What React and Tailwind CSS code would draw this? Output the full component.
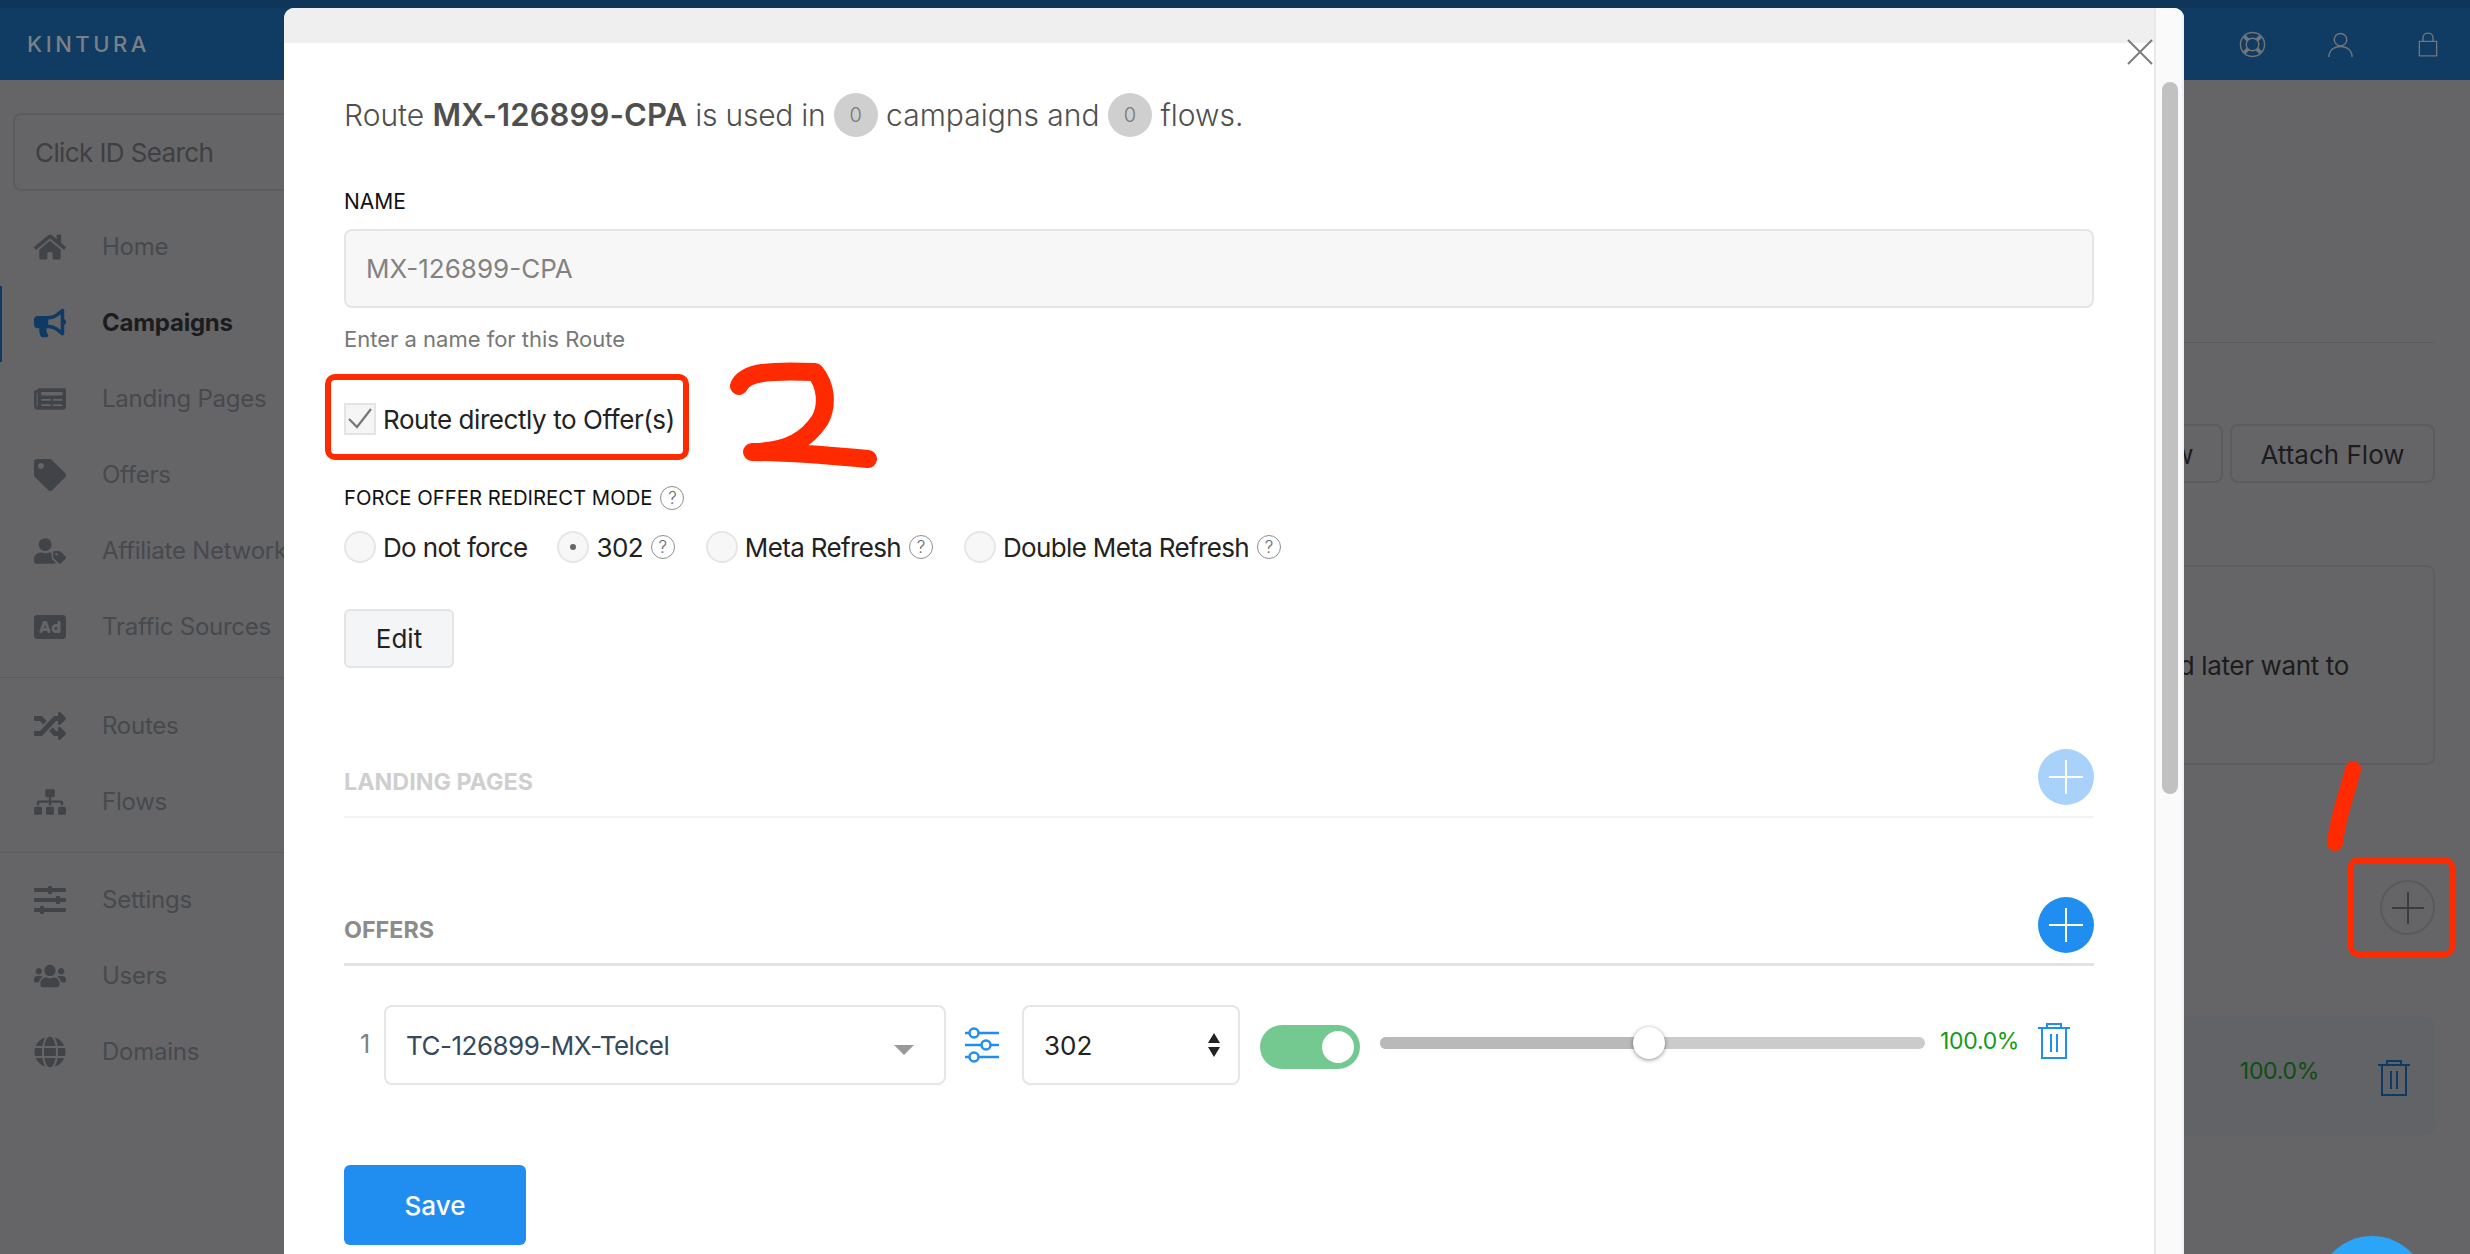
import React from "react";
import { FaHome, FaBullhorn, FaNewspaper, FaTag, FaUserTag, FaAd, FaRandom, FaSitemap, FaSlidersH, FaUsers, FaGlobe } from "react-icons/fa";

function NavItem({ icon: Icon, label, active }) {
  return (
    <div className={"relative flex h-[76px] items-center pl-[34px] text-[24px] tracking-[-0.25px] " + (active ? "font-bold text-[#1b1c1e]" : "text-[#46494d]")}>
      {active && <span className="absolute left-0 top-px h-[76px] w-[2px] bg-[#0f3a63]" />}
      <span className={"flex w-[68px] shrink-0 items-center " + (active ? "text-[#0f3a63]" : "text-[#404347]")}>
        <Icon size={32} />
      </span>
      <span className="whitespace-nowrap">{label}</span>
    </div>
  );
}

function Plus({ color = "#ffffff", size = 36 }) {
  return (
    <svg width={size} height={size} viewBox="0 0 36 36" fill="none" stroke={color} strokeWidth="2">
      <path d="M1 18H35M18 1V35" />
    </svg>
  );
}

function Trash({ color, className }) {
  return (
    <svg className={className} width="32" height="36" viewBox="0 0 32 36" fill="none" stroke={color} strokeWidth="2">
      <path d="M0 5H32M4 5V35H28V5M9 5V1H23V5M13 11V29M19 11V29" />
    </svg>
  );
}

function Help() {
  return (
    <span className="ml-2 flex h-6 w-6 shrink-0 items-center justify-center rounded-full border border-[#8f8f8f] text-[17px] font-light leading-none tracking-normal text-[#666]">?</span>
  );
}

function Radio({ label, checked, help, className = "" }) {
  return (
    <div className={"flex items-center text-[26px] tracking-[-0.65px] text-[#222] " + className}>
      <span className="mr-[7px] flex h-8 w-8 items-center justify-center rounded-full border-2 border-[#e6e6e6] bg-[#f7f7f7]">
        {checked && <span className="h-[6px] w-[6px] rounded-full bg-[#666]" />}
      </span>
      <span className="whitespace-nowrap">{label}</span>
      {help && <Help />}
    </div>
  );
}

function RedBox({ className }) {
  return <div className={"pointer-events-none absolute rounded-[10px] border-[6px] border-[#ff2a00] " + className} />;
}

export default function App() {
  return (
    <div className="relative h-[1254px] w-[2470px] overflow-hidden bg-[#656567] font-['Inter',sans-serif]">
      <header className="flex h-20 items-center justify-between bg-[#103b62] border-t-[8px] border-[#0f3659] pl-[27px] pr-[32px]">
        <span className="text-[22px] font-medium tracking-[0.16em] text-[#7b8084]">KINTURA</span>
        <div className="flex items-center">
          <svg className="mr-[62px]" width="27" height="27" viewBox="0 0 28 28" fill="none" stroke="#6f757a" strokeWidth="1.5">
            <circle cx="14" cy="14" r="12.5" />
            <circle cx="14" cy="14" r="6.5" />
            <path strokeWidth="4" d="M9.5 9.5L5.5 5.5M18.5 9.5L22.5 5.5M9.5 18.5L5.5 22.5M18.5 18.5L22.5 22.5" />
          </svg>
          <svg className="mr-[65px]" width="25" height="25" viewBox="0 0 26 26" fill="none" stroke="#6f757a" strokeWidth="1.5">
            <circle cx="13" cy="8" r="6.5" />
            <path d="M1 26C1 19 6 15 13 15C20 15 25 19 25 26" />
          </svg>
          <svg width="20" height="25" viewBox="0 0 22 27" fill="none" stroke="#6f757a" strokeWidth="1.5">
            <path d="M1.5 10H20.5V26H1.5ZM5.5 10V6C5.5 3 8 1 11 1C14 1 16.5 3 16.5 6V10" />
          </svg>
        </div>
      </header>

      <div className="flex h-[1174px]">
        <aside className="w-[300px] shrink-0 pt-[33px]">
          <div className="ml-[13px] flex h-[78px] items-center rounded-[8px] border-2 border-[#5c5c5e] pl-5 text-[26px] tracking-[-0.6px] text-[#3d3f41]">
            Click ID Search
          </div>
          <nav className="mt-[18px]">
            <NavItem icon={FaHome} label="Home" />
            <NavItem icon={FaBullhorn} label="Campaigns" active />
            <NavItem icon={FaNewspaper} label="Landing Pages" />
            <NavItem icon={FaTag} label="Offers" />
            <NavItem icon={FaUserTag} label="Affiliate Networks" />
            <NavItem icon={FaAd} label="Traffic Sources" />
            <div className="mb-[10px] mt-3 h-px bg-[#5b5b5d]" />
            <NavItem icon={FaRandom} label="Routes" />
            <NavItem icon={FaSitemap} label="Flows" />
            <div className="mb-[9px] mt-3 h-px bg-[#5b5b5d]" />
            <NavItem icon={FaSlidersH} label="Settings" />
            <NavItem icon={FaUsers} label="Users" />
            <NavItem icon={FaGlobe} label="Domains" />
          </nav>
        </aside>

        <main className="flex min-w-0 flex-1 flex-col items-end pr-[35px]">
          <div className="mt-[262px] h-px w-[500px] bg-[#5b5b5d]" />
          <div className="mt-[81px] flex gap-[7px]">
            <div className="flex h-[59px] w-[205px] items-center justify-center rounded-[8px] border-2 border-[#5c5c5e] pt-[2px] text-[26px] text-[#1c1c1e]">Attach View</div>
            <div className="flex h-[59px] w-[205px] items-center justify-center rounded-[8px] border-2 border-[#5c5c5e] pt-[2px] text-[26px] text-[#1c1c1e]">Attach Flow</div>
          </div>
          <div className="mt-[82px] flex h-[200px] w-[500px] items-center justify-end rounded-[8px] border-2 border-[#5e5e60] pr-[84px]">
            <span className="whitespace-nowrap text-[26px] tracking-[-0.35px] text-[#1c1c1e]">and later want to</span>
          </div>
          <div className="mt-[115px] flex h-[55px] w-[55px] items-center justify-center rounded-full border-2 border-[#5a5a5c]">
            <Plus color="#3b3b3d" size={34} />
          </div>
          <div className="mt-[82px] flex h-[118px] w-[500px] items-center justify-end gap-[59px] rounded-[8px] border-2 border-[#5f6469] bg-[#626366] pr-[23px]">
            <span className="-translate-y-[5px] text-[23px] tracking-[-0.3px] text-[#0f4d13]">100.0%</span>
            <Trash color="#0f3a63" className="translate-y-[2px]" />
          </div>
        </main>
      </div>

      <div className="absolute bottom-0 left-[284px] top-2 flex w-[1900px] overflow-hidden rounded-t-[10px] bg-white">
        <div className="min-w-0 flex-1">
          <div className="h-[35px] bg-[#efefef]" />
          <div className="pl-[60px] pr-[60px] pt-[50px]">
            <div className="flex h-[44px] items-center text-[30px] font-light text-[#4f4f4f]">
              <span>Route&nbsp;</span>
              <strong className="text-[31px] font-semibold tracking-[0.1px]">MX-126899-CPA</strong>
              <span className="tracking-[-0.25px]">&nbsp;is used in&nbsp;</span>
              <span className="flex h-[44px] w-[44px] items-center justify-center rounded-full bg-[#cfcfcf] text-[20px] text-[#777]">0</span>
              <span>&nbsp;campaigns and&nbsp;</span>
              <span className="flex h-[44px] w-[44px] items-center justify-center rounded-full bg-[#cfcfcf] text-[20px] text-[#777]">0</span>
              <span>&nbsp;flows.</span>
            </div>

            <div className="mt-[52px] h-[26px] text-[21px] leading-[26px] text-[#111]">NAME</div>
            <div className="mt-[14px] flex h-[79px] items-center rounded-[8px] border-2 border-[#e5e5e5] bg-[#f7f7f7] pl-5 text-[26px] text-[#828282]">MX-126899-CPA</div>
            <div className="mt-[17px] h-[28px] text-[22px] leading-[28px] text-[#777]">Enter a name for this Route</div>

            <div className="mt-[50px] flex h-8 items-center text-[26px] tracking-[-0.42px] text-[#222]">
              <span className="mr-[7px] flex h-8 w-8 items-center justify-center border-2 border-[#e4e4e4] bg-[#f5f5f5]">
                <svg width="24" height="24" viewBox="0 0 24 24" fill="none" stroke="#777" strokeWidth="2.2"><path d="M1 12L9 20L23 2" /></svg>
              </span>
              Route directly to Offer(s)
            </div>

            <div className="mt-[51px] flex h-6 items-center text-[20.3px] text-[#111]">
              FORCE OFFER REDIRECT MODE
              <Help />
            </div>
            <div className="mt-[21px] flex h-8 items-center">
              <Radio label="Do not force" />
              <Radio label="302" checked help className="ml-[30px]" />
              <Radio label="Meta Refresh" help className="ml-[31px]" />
              <Radio label="Double Meta Refresh" help className="ml-[31px]" />
            </div>

            <div className="mt-[46px] flex h-[59px] w-[110px] items-center justify-center rounded-[6px] border-2 border-[#e4e4e4] bg-[#f4f5f6] text-[26px] text-[#222]">Edit</div>

            <div className="mt-[81px] flex h-[56px] items-center justify-between">
              <span className="mt-[10px] text-[23.3px] font-bold text-[#cfcfcf]">LANDING PAGES</span>
              <span className="flex h-14 w-14 items-center justify-center rounded-full bg-[#a9d2fb]"><Plus /></span>
            </div>
            <div className="mt-[11px] h-[2px] bg-[#f3f3f3]" />

            <div className="mt-[79px] flex h-[56px] items-center justify-between">
              <span className="mt-[10px] text-[23.3px] font-bold text-[#8c8c8c]">OFFERS</span>
              <span className="flex h-14 w-14 items-center justify-center rounded-full bg-[#208ef0]"><Plus /></span>
            </div>
            <div className="mt-[10px] h-[3px] bg-[#e3e3e3]" />

            <div className="mt-[39px] flex h-[80px] items-center">
              <span className="w-10 shrink-0 pl-4 text-[25px] text-[#808080]">1</span>
              <div className="flex h-20 w-[562px] shrink-0 items-center justify-between rounded-[8px] border-2 border-[#e6e6e6] pl-5 pr-[30px] text-[26px] tracking-[-0.5px] text-[#34495e]">
                TC-126899-MX-Telcel
                <span className="mt-[10px] h-0 w-0 border-x-[10px] border-t-[10px] border-x-transparent border-t-[#999]" />
              </div>
              <svg className="ml-[18px] shrink-0" width="36" height="36" viewBox="0 0 36 36" fill="none" stroke="#208ef0" strokeWidth="2.5">
                <path d="M1 6H5M15 6H35M1 18H17M27 18H35M1 30H5M15 30H35" />
                <circle cx="10" cy="6" r="4.5" />
                <circle cx="22" cy="18" r="4.5" />
                <circle cx="10" cy="30" r="4.5" />
              </svg>
              <div className="ml-[22px] flex h-20 w-[218px] shrink-0 items-center justify-between rounded-[8px] border-2 border-[#e6e6e6] pl-5 pr-[18px] text-[26px] text-[#222]">
                302
                <svg width="12" height="24" viewBox="0 0 12 24" fill="#222"><path d="M6 0L12 10H0ZM0 14H12L6 24Z" /></svg>
              </div>
              <span className="relative ml-5 h-11 w-[100px] shrink-0 translate-y-[2px] rounded-full bg-[#74c991]">
                <span className="absolute right-[6px] top-[6px] h-8 w-8 rounded-full bg-white" />
              </span>
              <div className="relative ml-5 h-3 w-[545px] shrink-0 -translate-y-[2px] rounded-full bg-[#cbcbcb]">
                <div className="h-3 w-[270px] rounded-l-full bg-[#b9b9b9]" />
                <span className="absolute left-[253px] top-[-10px] h-8 w-8 rounded-full bg-white shadow-[0_1px_4px_rgba(0,0,0,0.45)]" />
              </div>
              <span className="ml-[15px] w-[98px] shrink-0 -translate-y-[4px] text-[23px] tracking-[-0.3px] text-[#169a16]">100.0%</span>
              <Trash color="#208ef0" className="shrink-0 -translate-y-[4px]" />
            </div>

            <div className="mt-[80px] flex h-20 w-[182px] items-center justify-center rounded-[6px] bg-[#208ef0] text-[26px] font-medium text-white">Save</div>
          </div>
        </div>
        <div className="w-[30px] shrink-0 border-x-2 border-l-[#e9e9e9] border-r-[#f1f1f1] bg-[#fafafa] pl-[6px] pt-[74px]">
          <div className="h-[712px] w-4 rounded-full bg-[#c1c1c1]" />
        </div>
        <svg className="absolute left-[1843px] top-[31px]" width="26" height="26" viewBox="0 0 26 26" stroke="#7d7d7d" strokeWidth="2" fill="none"><path d="M1 1L25 25M25 1L1 25" /></svg>
      </div>

      <div className="absolute left-[2317px] top-[1236px] h-[110px] w-[110px] rounded-full bg-[#2aa5f7]" />

      <RedBox className="left-[325px] top-[374px] h-[86px] w-[364px]" />
      <RedBox className="left-[2348px] top-[857px] h-[100px] w-[107px]" />
      <svg className="pointer-events-none absolute left-0 top-0" width="2470" height="1254" fill="none" stroke="#ff2a00" strokeLinecap="round" strokeLinejoin="round">
        <path strokeWidth="18" d="M739 386C745 372 770 370 815 372C826 385 828 405 820 420C808 438 790 452 752 452C790 452 835 456 868 459" />
        <path strokeWidth="16" d="M2353 769C2347 795 2338 815 2335 843" />
      </svg>
    </div>
  );
}
